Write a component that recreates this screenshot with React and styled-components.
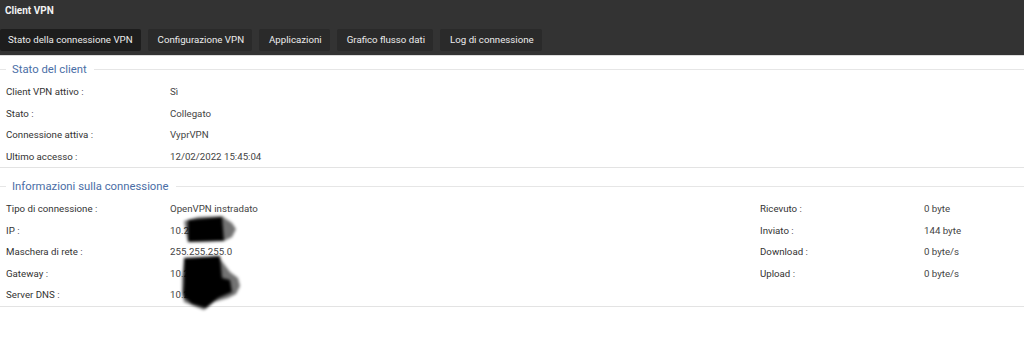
import React from "react";
import styled, { createGlobalStyle } from "styled-components";

const Global = createGlobalStyle`
  html, body { margin: 0; padding: 0; background: #fff; }
  body { font-family: Roboto, "Liberation Sans", Arial, sans-serif; }
`;

const Page = styled.div`
  width: 1024px;
  height: 358px;
  background: #fff;
  overflow: hidden;
`;

const Header = styled.div`
  background: #333333;
  height: 55px;
  border-bottom: 1px solid #dcdcdc;
  box-sizing: content-box;
  display: flex;
  flex-direction: column;
`;

const Title = styled.div`
  height: 22px;
  line-height: 22px;
  padding-left: 5px;
  color: #f2f2f2;
  font-weight: 700;
  font-size: 10px;
`;

const Tabs = styled.div`
  display: flex;
  gap: 7px;
  margin-top: 7px;
`;

const Tab = styled.div`
  height: 22px;
  line-height: 22px;
  padding: 0 8px 0 ${(p) => (p.$active ? 8 : 10)}px;
  font-size: 9.7px;
  color: #ececec;
  background: ${(p) => (p.$active ? "#1d1d1d" : "#2a2a2a")};
  border-radius: 2px;
  white-space: nowrap;
`;

const Section = styled.div`
  position: relative;
  padding-top: ${(p) => (p.$first ? 5 : 10)}px;
  border-bottom: 1px solid #e3e3e3;
`;

const Legend = styled.div`
  display: flex;
  align-items: center;
  height: 16px;
  margin-bottom: 4px;
  &::before {
    content: "";
    width: 6px;
    height: 1px;
    background: #e6e6e6;
  }
  &::after {
    content: "";
    flex: 1;
    height: 1px;
    background: #e6e6e6;
  }
`;

const LegendText = styled.span`
  padding: 0 7px 0 6px;
  color: #4a6ea6;
  font-size: 11.3px;
`;

const Grid = styled.div`
  display: grid;
  grid-template-columns: 164px 590px 164px 1fr;
  grid-auto-rows: 21.5px;
  padding-left: 6px;
  font-size: 9.7px;
  align-items: center;
`;

const Label = styled.div`
  color: #333;
`;

const Value = styled.div`
  color: #444;
  position: relative;
`;

const Blob = styled.svg`
  position: absolute;
  left: ${(p) => p.$x}px;
  top: ${(p) => p.$y}px;
  pointer-events: none;
`;

const clientRows = [
  ["Client VPN attivo :", "Sì"],
  ["Stato :", "Collegato"],
  ["Connessione attiva :", "VyprVPN"],
  ["Ultimo accesso :", "12/02/2022 15:45:04"],
];

const connRows = [
  ["Tipo di connessione :", "OpenVPN instradato", "Ricevuto :", "0 byte"],
  ["IP :", "10.2", "Inviato :", "144 byte"],
  ["Maschera di rete :", "255.255.255.0", "Download :", "0 byte/s"],
  ["Gateway :", "10.2", "Upload :", "0 byte/s"],
  ["Server DNS :", "10.2", "", ""],
];

export default function App() {
  return (
    <Page>
      <Global />
      <Header>
        <Title>Client VPN</Title>
        <Tabs>
          <Tab $active>Stato della connessione VPN</Tab>
          <Tab>Configurazione VPN</Tab>
          <Tab>Applicazioni</Tab>
          <Tab>Grafico flusso dati</Tab>
          <Tab>Log di connessione</Tab>
        </Tabs>
      </Header>
      <Section $first>
        <Legend>
          <LegendText>Stato del client</LegendText>
        </Legend>
        <Grid>
          {clientRows.map(([l, v]) => (
            <React.Fragment key={l}>
              <Label>{l}</Label>
              <Value>{v}</Value>
              <div />
              <div />
            </React.Fragment>
          ))}
        </Grid>
      </Section>
      <Section>
        <Legend>
          <LegendText>Informazioni sulla connessione</LegendText>
        </Legend>
        <Grid>
          {connRows.map(([l, v, l2, v2]) => (
            <React.Fragment key={l}>
              <Label>{l}</Label>
              <Value>{v}</Value>
              <Label>{l2}</Label>
              <Value>{v2}</Value>
            </React.Fragment>
          ))}
        </Grid>
        <Blob $x={176} $y={45} width="64" height="34" viewBox="0 0 64 34">
          <defs>
            <filter id="b1" x="-20%" y="-20%" width="140%" height="140%">
              <feGaussianBlur stdDeviation="1.6" />
            </filter>
          </defs>
          <g filter="url(#b1)">
            <path d="M8 8 L22 4 L46 3 L50 6 L56 10 L60 16 L56 24 L48 28 L40 28 L12 29 L10 20 Z" fill="#000" opacity="0.55" />
            <path d="M12 7 L46 4 L48 28 L12 29 Z" fill="#050505" />
          </g>
        </Blob>
        <Blob $x={172} $y={84} width="72" height="62" viewBox="0 0 72 62">
          <defs>
            <filter id="b2" x="-20%" y="-20%" width="140%" height="140%">
              <feGaussianBlur stdDeviation="1.6" />
            </filter>
          </defs>
          <g filter="url(#b2)">
            <path d="M12 8 L46 4 L52 12 L58 20 L66 26 L68 34 L64 42 L56 46 L42 50 L32 58 L22 54 L12 50 L10 40 L10 26 Z" fill="#000" opacity="0.55" />
            <path d="M12 6 L48 4 L50 26 L58 28 L60 40 L46 46 L34 56 L20 52 L11 44 L12 30 Z" fill="#040404" />
          </g>
        </Blob>
      </Section>
    </Page>
  );
}
